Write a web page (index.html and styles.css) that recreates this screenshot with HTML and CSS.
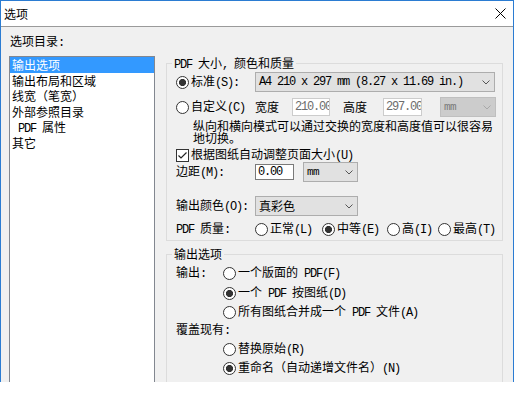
FILE: index.html
```html
<!DOCTYPE html>
<html lang="zh-CN">
<head>
<meta charset="utf-8">
<link rel="stylesheet" href="styles.css">
</head>
<body>
<div class="win">
  <div class="titlebar">
    <span class="title">选项</span>
    <svg class="close" width="11" height="11" viewBox="0 0 11 11"><path d="M0.5 0.5L10.5 10.5M10.5 0.5L0.5 10.5" stroke="#000" stroke-width="1" fill="none"/></svg>
  </div>
  <div class="body">
    <div class="left">
      <div class="lbl">选项目录<span class="a">:</span></div>
      <ul class="list">
        <li class="sel">输出选项</li>
        <li>输出布局和区域</li>
        <li>线宽（笔宽）</li>
        <li>外部参照目录</li>
        <li><span class="a">&nbsp;PDF </span>属性</li>
        <li>其它</li>
      </ul>
    </div>
    <div class="right">
      <div class="group g1">
        <div class="gt"><span class="a">PDF </span>大小<span class="a">, </span>颜色和质量</div>
        <div class="row h20">
          <div class="cell c79"><span class="radio on"></span><span class="t">标准<span class="a">(S):</span></span></div>
          <div class="combo w240"><span class="t a">A4 210 x 297 mm (8.27 x 11.69 in.)</span><svg class="chev" width="8" height="5" viewBox="0 0 8 5"><path d="M0.5 0.5L4 4L7.5 0.5" fill="none" stroke="#555"/></svg></div>
        </div>
        <div class="row h20 mt5">
          <div class="cell c79"><span class="radio"></span><span class="t">自定义<span class="a">(C)</span></span></div>
          <div class="cell c37"><span class="t">宽度</span></div>
          <div class="edit dis w38"><span class="a">210.00</span></div>
          <div class="cell c40 ml13"><span class="t">高度</span></div>
          <div class="edit dis w39"><span class="a">297.00</span></div>
          <div class="combo dis w56 ml18"><span class="t a sm">mm</span><svg class="chev" width="8" height="5" viewBox="0 0 8 5"><path d="M0.5 0.5L4 4L7.5 0.5" fill="none" stroke="#a8a8a8"/></svg></div>
        </div>
        <p class="note">纵向和横向模式可以通过交换的宽度和高度值可以很容易地切换。</p>
        <div class="row h14 mt4">
          <span class="check"><svg width="11" height="11" viewBox="0 0 11 11"><path d="M1.5 5.5L4 8L9.5 2.5" fill="none" stroke="#222" stroke-width="1.2"/></svg></span><span class="t">根据图纸自动调整页面大小<span class="a">(U)</span></span>
        </div>
        <div class="row h20">
          <div class="cell c79"><span class="t">边距<span class="a">(M):</span></span></div>
          <div class="edit w39 h16"><span class="a">0.00</span></div>
          <div class="combo w55 ml9"><span class="t a sm">mm</span><svg class="chev" width="8" height="5" viewBox="0 0 8 5"><path d="M0.5 0.5L4 4L7.5 0.5" fill="none" stroke="#555"/></svg></div>
        </div>
        <div class="row h20 mt14">
          <div class="cell c79"><span class="t">输出颜色<span class="a">(O):</span></span></div>
          <div class="combo w103"><span class="t">真彩色</span><svg class="chev" width="8" height="5" viewBox="0 0 8 5"><path d="M0.5 0.5L4 4L7.5 0.5" fill="none" stroke="#555"/></svg></div>
        </div>
        <div class="row h18 mt4">
          <div class="cell c79"><span class="t"><span class="a">PDF </span>质量<span class="a">:</span></span></div>
          <div class="cell c67"><span class="radio"></span><span class="t">正常<span class="a">(L)</span></span></div>
          <div class="cell c65"><span class="radio on"></span><span class="t">中等<span class="a">(E)</span></span></div>
          <div class="cell c51"><span class="radio"></span><span class="t">高<span class="a">(I)</span></span></div>
          <div class="cell"><span class="radio"></span><span class="t">最高<span class="a">(T)</span></span></div>
        </div>
      </div>
      <div class="group g2">
        <div class="gt">输出选项</div>
        <div class="row h20">
          <div class="cell c47"><span class="t">输出<span class="a">:</span></span></div>
          <div class="cell"><span class="radio"></span><span class="t">一个版面的<span class="a"> PDF(F)</span></span></div>
        </div>
        <div class="row h20 in47">
          <div class="cell"><span class="radio on"></span><span class="t">一个<span class="a"> PDF </span>按图纸<span class="a">(D)</span></span></div>
        </div>
        <div class="row h18 in47">
          <div class="cell"><span class="radio"></span><span class="t">所有图纸合并成一个<span class="a"> PDF </span>文件<span class="a">(A)</span></span></div>
        </div>
        <div class="row h18">
          <div class="cell"><span class="t">覆盖现有<span class="a">:</span></span></div>
        </div>
        <div class="row h20 in47">
          <div class="cell"><span class="radio"></span><span class="t">替换原始<span class="a">(R)</span></span></div>
        </div>
        <div class="row h18 in47">
          <div class="cell"><span class="radio on"></span><span class="t">重命名（自动递增文件名）<span class="a">(N)</span></span></div>
        </div>
      </div>
    </div>
  </div>
</div>
</body>
</html>
```
FILE: styles.css
```css
* { box-sizing: border-box; }
html, body { margin: 0; background: #fff; }
body { font: 12px/14px "Noto Sans CJK SC", sans-serif; color: #000; }
.a { font-family: "Liberation Mono", monospace; font-size: 12px; letter-spacing: -1.2px; }
.a.sm { font-size: 11px; letter-spacing: -0.6px; }

.win { width: 514px; border: 1px solid #2b7cd2; border-bottom: 0; }
.titlebar { height: 26px; background: #fff; border-bottom: 1px solid #9a9a9a; display: flex; align-items: center; padding: 0 7px 0 3px; }
.title { line-height: 14px; }
.close { margin-left: auto; display: block; }

.body { height: 355px; background: #f0f0f0; display: flex; overflow: hidden; }
.left { width: 154px; flex: none; padding: 7px 0 0 8px; }
.lbl { line-height: 14px; padding-left: 1px; }
.list { margin: 6px 0 0; padding: 0; list-style: none; border: 1px solid #828790; background: #fff; height: 400px; }
.list li { line-height: 15.6px; height: 15.6px; padding-left: 2px; white-space: nowrap; }
.list .sel { background: #3399ff; color: #fff; }

.right { width: 337px; flex: none; margin-left: 11px; padding-top: 36px; }
.group { border: 1px solid #dcdcdc; position: relative; }
.gt { position: absolute; top: -7px; left: 5px; padding: 0 2px; background: #f0f0f0; line-height: 12px; white-space: nowrap; }
.g1 { padding: 8px 0 2px 9px; }
.g2 { margin-top: 13px; padding: 8px 0 20px 9px; }

.row { display: flex; align-items: center; }
.h14 { height: 14px; }
.h18 { height: 18px; }
.h20 { height: 20px; }
.mt4 { margin-top: 4px; }
.mt5 { margin-top: 5px; }
.mt14 { margin-top: 14px; }
.ml9 { margin-left: 9px; }
.ml13 { margin-left: 13px; }
.ml18 { margin-left: 18px; }
.in47 { padding-left: 47px; }

.cell { display: flex; align-items: center; flex: none; white-space: nowrap; }
.c37 { width: 37px; }
.c40 { width: 40px; }
.c47 { width: 47px; }
.c51 { width: 51px; }
.c65 { width: 65px; }
.c67 { width: 67px; }
.c79 { width: 79px; }
.t { white-space: nowrap; line-height: 14px; }

.radio { width: 13px; height: 13px; flex: none; border: 1px solid #333; border-radius: 50%; background: #fff; margin-right: 2px; }
.radio.on { background: radial-gradient(circle at center, #333 0 3.2px, #fff 3.9px); }
.check { width: 13px; height: 13px; flex: none; border: 1px solid #333; background: #fff; margin-right: 2px; display: flex; align-items: center; justify-content: center; }
.check svg { display: block; }

.combo { height: 20px; flex: none; border: 1px solid #adadad; background: #e1e1e1; display: flex; align-items: center; padding-left: 3px; white-space: nowrap; }
.combo.dis { background: #cccccc; border-color: #bfbfbf; color: #7a7a7a; }
.chev { margin-left: auto; margin-right: 4px; display: block; flex: none; }
.w55 { width: 55px; }
.w56 { width: 56px; }
.w103 { width: 103px; }
.w240 { width: 240px; }

.edit { height: 18px; flex: none; border: 1px solid #7a7a7a; background: #fff; padding-left: 2px; display: flex; align-items: center; overflow: hidden; white-space: nowrap; }
.edit.dis { border-color: #cccccc; color: #6d6d6d; }
.w38 { width: 38px; }
.w39 { width: 39px; }
.h16 { height: 16px; }

.note { margin: 3px 0 0; padding-left: 17px; width: 318px; line-height: 12px; height: 24px; }
```
